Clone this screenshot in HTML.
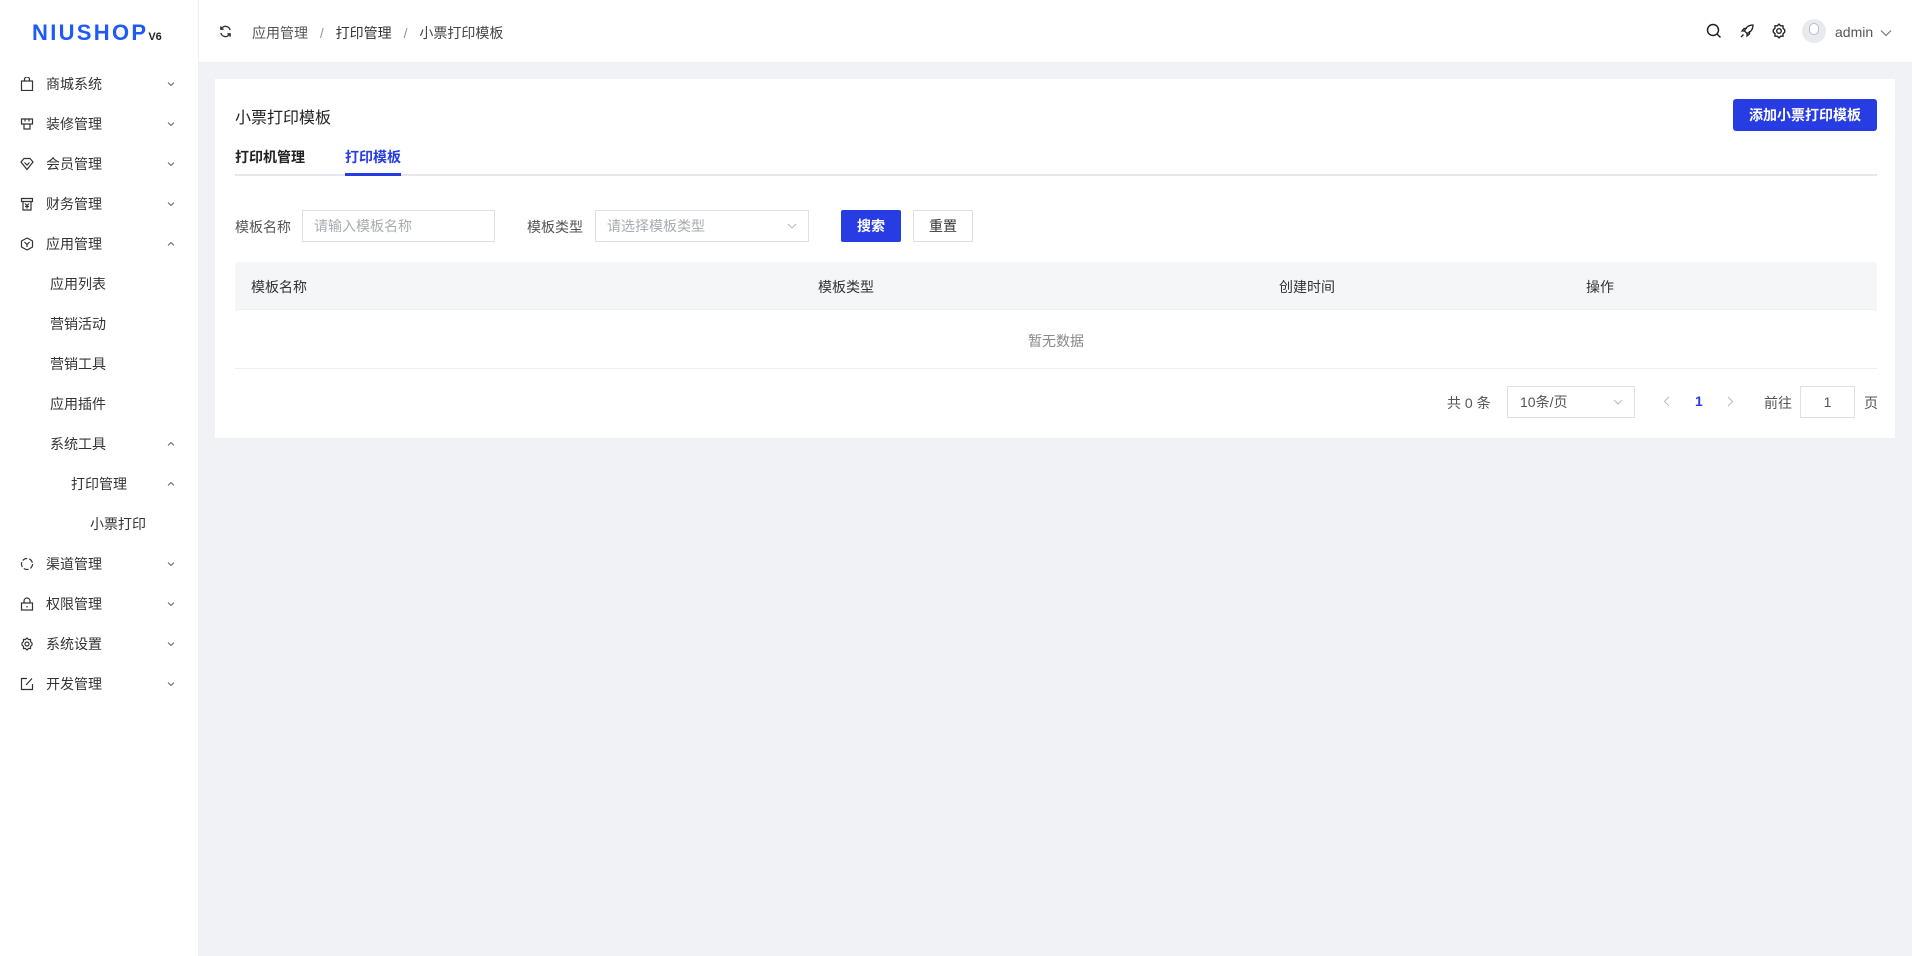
<!DOCTYPE html>
<html><head><meta charset="utf-8"><style>
*{margin:0;padding:0;box-sizing:border-box}
body{width:1912px;height:956px;background:#f0f2f5;font-family:"Liberation Sans","Noto Sans CJK SC",sans-serif;color:#333;font-size:14px;position:relative;overflow:hidden}
.abs{position:absolute}
.side{left:0;top:0;width:199px;height:956px;background:#fff;border-right:1px solid #eceef2}
.logo{left:32px;top:20px;font-size:22px;font-weight:bold;color:#1f5af4;letter-spacing:2.3px;font-family:"Liberation Sans",sans-serif}
.logo small{font-size:11px;color:#222;letter-spacing:0;margin-left:0}
.mi{position:absolute;left:0;width:199px;height:40px;line-height:40px;font-size:14px;color:#333}
.mi svg.ic{position:absolute;left:20px;top:13px}
.mi .t{position:absolute}
.mi .ar{position:absolute;left:167px;top:16px;width:8px;height:8px}
.hdr{left:199px;top:0;width:1713px;height:62px;background:#fff}
.card{left:215px;top:79px;width:1680px;height:359px;background:#fff}
.inp{position:absolute;border:1px solid #dcdfe6;background:#fff;height:32px;line-height:30px;font-size:14px;color:#a8abb2;padding-left:11px}
.th{position:absolute;top:277px;font-size:14px;color:#333}
</style></head><body>
<div class="abs side">
 <div class="abs logo">NIUSHOP<small>V6</small></div>
</div>
<div class="mi" style="top:64px"><svg class="ic" width="14" height="14" viewBox="0 0 14 14" fill="none" stroke="#333" stroke-width="1.2"><rect x="1.5" y="4" width="11" height="9.5"/><path d="M4.5 4V2.5a2.5 2.5 0 0 1 5 0V4"/></svg><span class="t" style="left:46px">商城系统</span><svg class="ar" viewBox="0 0 8 8"><path d="M1 2.5 4 5.5 7 2.5" fill="none" stroke="#666"/></svg></div>
<div class="mi" style="top:104px"><svg class="ic" width="14" height="14" viewBox="0 0 14 14" fill="none" stroke="#333" stroke-width="1.2"><path d="M1.5 2h11v5h-11zM4 7v5h6V7M5 2v2.5M9 2v2.5"/></svg><span class="t" style="left:46px">装修管理</span><svg class="ar" viewBox="0 0 8 8"><path d="M1 2.5 4 5.5 7 2.5" fill="none" stroke="#666"/></svg></div>
<div class="mi" style="top:144px"><svg class="ic" width="14" height="14" viewBox="0 0 14 14" fill="none" stroke="#333" stroke-width="1.2"><path d="M1 5 4 1.5h6L13 5 7 12.5z"/><path d="M4.5 5.5 7 8l2.5-2.5"/></svg><span class="t" style="left:46px">会员管理</span><svg class="ar" viewBox="0 0 8 8"><path d="M1 2.5 4 5.5 7 2.5" fill="none" stroke="#666"/></svg></div>
<div class="mi" style="top:184px"><svg class="ic" width="14" height="14" viewBox="0 0 14 14" fill="none" stroke="#333" stroke-width="1.2"><path d="M1.5 1.5h11v3h-11zM3 4.5V13h8V4.5M5 6.5 7 8.5 9 6.5M7 8.5v3M5 9.5h4"/></svg><span class="t" style="left:46px">财务管理</span><svg class="ar" viewBox="0 0 8 8"><path d="M1 2.5 4 5.5 7 2.5" fill="none" stroke="#666"/></svg></div>
<div class="mi" style="top:224px"><svg class="ic" width="14" height="14" viewBox="0 0 14 14" fill="none" stroke="#333" stroke-width="1.2"><path d="M7 1 12.5 4v6L7 13 1.5 10V4z"/><path d="M4.5 5 7 7.5 9.5 5M7 7.5V10"/></svg><span class="t" style="left:46px">应用管理</span><svg class="ar" viewBox="0 0 8 8"><path d="M1 5.5 4 2.5 7 5.5" fill="none" stroke="#666"/></svg></div>
<div class="mi" style="top:264px"><span class="t" style="left:50px">应用列表</span></div>
<div class="mi" style="top:304px"><span class="t" style="left:50px">营销活动</span></div>
<div class="mi" style="top:344px"><span class="t" style="left:50px">营销工具</span></div>
<div class="mi" style="top:384px"><span class="t" style="left:50px">应用插件</span></div>
<div class="mi" style="top:424px"><span class="t" style="left:50px">系统工具</span><svg class="ar" viewBox="0 0 8 8"><path d="M1 5.5 4 2.5 7 5.5" fill="none" stroke="#666"/></svg></div>
<div class="mi" style="top:464px"><span class="t" style="left:71px">打印管理</span><svg class="ar" viewBox="0 0 8 8"><path d="M1 5.5 4 2.5 7 5.5" fill="none" stroke="#666"/></svg></div>
<div class="mi" style="top:504px"><span class="t" style="left:90px">小票打印</span></div>
<div class="mi" style="top:544px"><svg class="ic" width="14" height="14" viewBox="0 0 14 14" fill="none" stroke="#333" stroke-width="1.2" stroke-dasharray="5 2"><circle cx="7" cy="7" r="5.5"/></svg><span class="t" style="left:46px">渠道管理</span><svg class="ar" viewBox="0 0 8 8"><path d="M1 2.5 4 5.5 7 2.5" fill="none" stroke="#666"/></svg></div>
<div class="mi" style="top:584px"><svg class="ic" width="14" height="14" viewBox="0 0 14 14" fill="none" stroke="#333" stroke-width="1.2"><rect x="1.5" y="6" width="11" height="7"/><path d="M4 6V4a3 3 0 0 1 6 0v2M7 9v1.5"/></svg><span class="t" style="left:46px">权限管理</span><svg class="ar" viewBox="0 0 8 8"><path d="M1 2.5 4 5.5 7 2.5" fill="none" stroke="#666"/></svg></div>
<div class="mi" style="top:624px"><svg class="ic" width="14" height="14" viewBox="0 0 14 14" fill="none" stroke="#333" stroke-width="1.2"><path d="M7 1l1.5 1.5h2v2L12 6v2l-1.5 1.5v2h-2L7 13l-1.5-1.5h-2v-2L2 8V6l1.5-1.5v-2h2z"/><circle cx="7" cy="7" r="2"/></svg><span class="t" style="left:46px">系统设置</span><svg class="ar" viewBox="0 0 8 8"><path d="M1 2.5 4 5.5 7 2.5" fill="none" stroke="#666"/></svg></div>
<div class="mi" style="top:664px"><svg class="ic" width="14" height="14" viewBox="0 0 14 14" fill="none" stroke="#333" stroke-width="1.2"><path d="M7 1.5H1.5v11h11V7M6 8l6-6.5M6 8v0"/></svg><span class="t" style="left:46px">开发管理</span><svg class="ar" viewBox="0 0 8 8"><path d="M1 2.5 4 5.5 7 2.5" fill="none" stroke="#666"/></svg></div>

<div class="abs hdr"></div>
<svg class="abs" style="left:219px;top:25px" width="13" height="13" viewBox="0 0 14 14" fill="none" stroke="#333" stroke-width="1.5"><path d="M12 5.5A5 5 0 0 0 2.5 4.5M2 8.5a5 5 0 0 0 9.5 1"/><path d="M2 1.5v3h3M12 12.5v-3H9"/></svg>
<div class="abs" style="left:252px;top:23px;font-size:14px;color:#555">应用管理 <span style="color:#999;margin:0 8px">/</span> <span style="color:#333">打印管理</span> <span style="color:#999;margin:0 8px">/</span> <span style="color:#444">小票打印模板</span></div>
<svg class="abs" style="left:1706px;top:23px" width="16" height="16" viewBox="0 0 16 16" fill="none" stroke="#222" stroke-width="1.5"><circle cx="7" cy="7" r="5.5"/><path d="M11 11l3.5 3.5"/></svg>
<svg class="abs" style="left:1739px;top:23px" width="16" height="16" viewBox="0 0 16 16" fill="none" stroke="#222" stroke-width="1.3"><path d="M14 2c-4 0-7 2-8.5 6l2.5 2.5C12 9 14 6 14 2zM5.5 8 3 8 5 5.5h3M8 10.5V13l2.5-2V8M4.5 11.5l-2.5 2.5"/></svg>
<svg class="abs" style="left:1771px;top:23px" width="16" height="16" viewBox="0 0 14 14" fill="none" stroke="#222" stroke-width="1.2"><path d="M7 1l1.5 1.5h2v2L12 6v2l-1.5 1.5v2h-2L7 13l-1.5-1.5h-2v-2L2 8V6l1.5-1.5v-2h2z"/><circle cx="7" cy="7" r="2"/></svg>
<div class="abs" style="left:1802px;top:19px;width:24px;height:24px;border-radius:50%;background:#e8eaf0;overflow:hidden"><div style="position:absolute;left:7px;top:4px;width:10px;height:12px;border-radius:5px;background:#fff;border:1px solid #bbc"></div></div>
<div class="abs" style="left:1835px;top:24px;font-size:14px;color:#555">admin</div>
<svg class="abs" style="left:1880px;top:29px" width="12" height="8" viewBox="0 0 12 8"><path d="M1 1.5 6 6.5 11 1.5" fill="none" stroke="#777" stroke-width="1.2"/></svg>

<div class="abs card"></div>
<div class="abs" style="left:235px;top:104px;font-size:16px;color:#222">小票打印模板</div>
<div class="abs" style="left:1733px;top:99px;width:144px;height:32px;background:#273de3;border-radius:3px;color:#fff;font-size:14px;font-weight:bold;text-align:center;line-height:32px">添加小票打印模板</div>
<div class="abs" style="left:235px;top:147px;font-size:14px;font-weight:bold;color:#222">打印机管理</div>
<div class="abs" style="left:345px;top:147px;font-size:14px;font-weight:bold;color:#273de3">打印模板</div>
<div class="abs" style="left:235px;top:174px;width:1642px;height:2px;background:#e4e7ed"></div>
<div class="abs" style="left:345px;top:173px;width:56px;height:3px;background:#273de3"></div>

<div class="abs" style="left:235px;top:217px;font-size:14px;color:#555">模板名称</div>
<div class="inp" style="left:302px;top:210px;width:193px">请输入模板名称</div>
<div class="abs" style="left:527px;top:217px;font-size:14px;color:#555">模板类型</div>
<div class="inp" style="left:595px;top:210px;width:214px">请选择模板类型<svg style="position:absolute;right:11px;top:12px" width="10" height="7" viewBox="0 0 10 7"><path d="M1 1 5 5 9 1" fill="none" stroke="#bbb"/></svg></div>
<div class="abs" style="left:841px;top:210px;width:60px;height:32px;background:#273de3;border-radius:2px;color:#fff;font-size:14px;font-weight:bold;text-align:center;line-height:32px">搜索</div>
<div class="abs" style="left:913px;top:210px;width:60px;height:32px;border:1px solid #dcdfe6;border-radius:2px;color:#333;font-size:14px;text-align:center;line-height:30px">重置</div>

<div class="abs" style="left:235px;top:262px;width:1642px;height:48px;background:#f5f6f8;border-bottom:1px solid #ebeef5"></div>
<div class="th" style="left:251px">模板名称</div>
<div class="th" style="left:818px">模板类型</div>
<div class="th" style="left:1279px">创建时间</div>
<div class="th" style="left:1586px">操作</div>
<div class="abs" style="left:235px;top:331px;width:1642px;text-align:center;font-size:14px;color:#888">暂无数据</div>
<div class="abs" style="left:235px;top:368px;width:1642px;height:1px;background:#ebeef5"></div>

<div class="abs" style="left:1447px;top:393px;font-size:14px;color:#555">共 0 条</div>
<div class="inp" style="left:1507px;top:386px;width:128px;color:#555;padding-left:12px">10条/页<svg style="position:absolute;right:11px;top:12px" width="10" height="7" viewBox="0 0 10 7"><path d="M1 1 5 5 9 1" fill="none" stroke="#bbb"/></svg></div>
<svg class="abs" style="left:1663px;top:396px" width="7" height="11" viewBox="0 0 7 11"><path d="M6 1 1.5 5.5 6 10" fill="none" stroke="#bbb"/></svg>
<div class="abs" style="left:1695px;top:393px;font-size:14px;font-weight:bold;color:#273de3">1</div>
<svg class="abs" style="left:1727px;top:396px" width="7" height="11" viewBox="0 0 7 11"><path d="M1 1 5.5 5.5 1 10" fill="none" stroke="#bbb"/></svg>
<div class="abs" style="left:1764px;top:393px;font-size:14px;color:#555">前往</div>
<div class="inp" style="left:1800px;top:386px;width:55px;color:#555;text-align:center;padding:0">1</div>
<div class="abs" style="left:1864px;top:393px;font-size:14px;color:#555">页</div>
</body></html>
